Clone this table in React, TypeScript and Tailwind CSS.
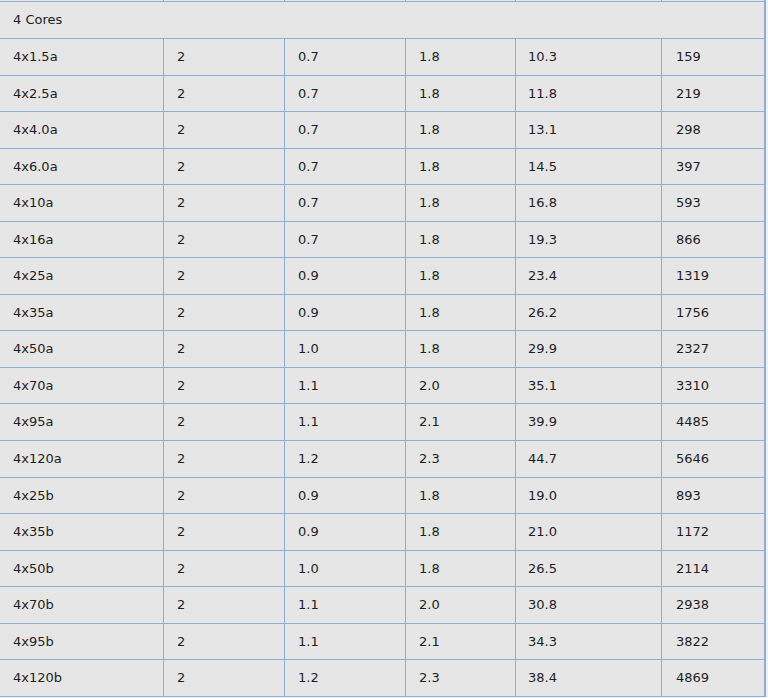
import React from 'react';

const rows: string[][] = [
  ['4x1.5a', '2', '0.7', '1.8', '10.3', '159'],
  ['4x2.5a', '2', '0.7', '1.8', '11.8', '219'],
  ['4x4.0a', '2', '0.7', '1.8', '13.1', '298'],
  ['4x6.0a', '2', '0.7', '1.8', '14.5', '397'],
  ['4x10a', '2', '0.7', '1.8', '16.8', '593'],
  ['4x16a', '2', '0.7', '1.8', '19.3', '866'],
  ['4x25a', '2', '0.9', '1.8', '23.4', '1319'],
  ['4x35a', '2', '0.9', '1.8', '26.2', '1756'],
  ['4x50a', '2', '1.0', '1.8', '29.9', '2327'],
  ['4x70a', '2', '1.1', '2.0', '35.1', '3310'],
  ['4x95a', '2', '1.1', '2.1', '39.9', '4485'],
  ['4x120a', '2', '1.2', '2.3', '44.7', '5646'],
  ['4x25b', '2', '0.9', '1.8', '19.0', '893'],
  ['4x35b', '2', '0.9', '1.8', '21.0', '1172'],
  ['4x50b', '2', '1.0', '1.8', '26.5', '2114'],
  ['4x70b', '2', '1.1', '2.0', '30.8', '2938'],
  ['4x95b', '2', '1.1', '2.1', '34.3', '3822'],
  ['4x120b', '2', '1.2', '2.3', '38.4', '4869'],
];

// column widths include the right border line
const cols = ['w-[164px]', 'w-[121px]', 'w-[121px]', 'w-[110px]', 'w-[146px]', 'w-[103px]'];
const pads = ['pl-[13px]', 'pl-[13px]', 'pl-[13px]', 'pl-[13px]', 'pl-[12px]', 'pl-[14px]'];

const App = () => {
  return (
    <div className="min-h-screen w-[768px] bg-[#f0f0f0] overflow-hidden font-['DejaVu_Sans',sans-serif] text-[13px] text-[#1e1e1e]">
      <div className="w-[766px] border-r-2 border-[#8db0d0] bg-[#e6e6e6]">
        {/* sliver of the row scrolled above */}
        <div className="flex h-px">
          {cols.map((c, i) => (
            <div key={i} className={`${c} shrink-0 ${i < 5 ? 'border-r border-[#8db0d0]' : ''}`} />
          ))}
        </div>
        <div className="flex h-[38px] items-center border-y border-[#8db0d0] pl-[13px]">4 Cores</div>
        {rows.map((r, ri) => (
          <div key={ri} className="flex h-[36.56px] border-b border-[#8db0d0]">
            {r.map((v, i) => (
              <div
                key={i}
                className={`${cols[i]} ${pads[i]} shrink-0 flex items-center ${i < 5 ? 'border-r border-[#8db0d0]' : ''}`}
              >
                {v}
              </div>
            ))}
          </div>
        ))}
      </div>
    </div>
  );
};

export default App;
